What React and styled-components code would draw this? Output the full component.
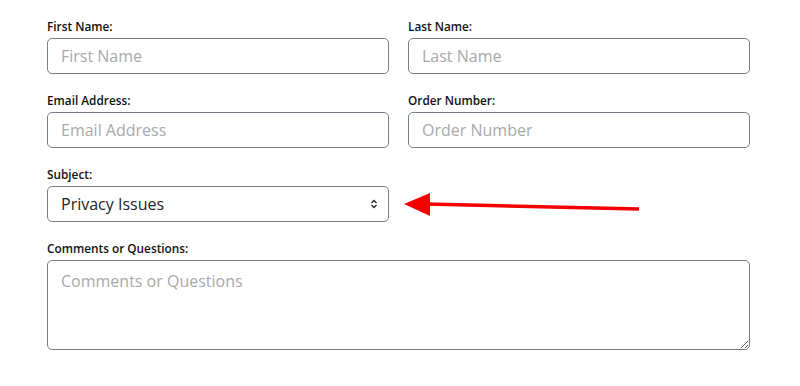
import React from "react";
import styled, { createGlobalStyle } from "styled-components";

const Global = createGlobalStyle`
  * { box-sizing: border-box; }
  body { margin: 0; background: #fff; font-family: "Open Sans", "Noto Sans", sans-serif; }
`;

const Page = styled.div`
  position: relative;
  width: 800px;
  height: 386px;
  padding: 18px 50px 0 47px;
`;

const Form = styled.form`
  display: grid;
  grid-template-columns: 1fr 1fr;
  column-gap: 19px;
  row-gap: 18px;
  width: 703px;
`;

const Field = styled.div`
  display: flex;
  flex-direction: column;
  gap: 4px;
  grid-column: ${(p) => (p.$wide ? "1 / 3" : "auto")};
`;

const Label = styled.label`
  font-size: 11.8px;
  line-height: 16px;
  font-weight: 600;
  color: #111;
`;

const Input = styled.input`
  height: 36px;
  width: 100%;
  border: 1px solid #76808a;
  border-radius: 5px;
  padding: 0 13px;
  font-family: "Open Sans", sans-serif;
  font-size: 16px;
  color: #212529;
  outline: none;
  &::placeholder { color: #a9a9a9; }
`;

const SelectWrap = styled.div`
  position: relative;
  width: 342px;
`;

const Select = styled.select`
  appearance: none;
  -webkit-appearance: none;
  height: 36px;
  width: 100%;
  border: 1px solid #76808a;
  border-radius: 5px;
  padding: 0 13px;
  background: #fff;
  font-family: "Open Sans", sans-serif;
  font-size: 16px;
  color: #212529;
  outline: none;
`;

const Caret = styled.svg`
  position: absolute;
  right: 11px;
  top: 12px;
  pointer-events: none;
`;

const TextArea = styled.textarea`
  height: 90px;
  width: 100%;
  border: 1px solid #76808a;
  border-radius: 5px;
  padding: 9px 13px;
  font-family: "Open Sans", sans-serif;
  font-size: 16px;
  line-height: 22px;
  color: #212529;
  resize: both;
  outline: none;
  &::placeholder { color: #a9a9a9; }
`;

const Arrow = styled.svg`
  position: absolute;
  left: 400px;
  top: 188px;
`;

export default function App() {
  return (
    <Page>
      <Global />
      <Form onSubmit={(e) => e.preventDefault()}>
        <Field>
          <Label>First Name:</Label>
          <Input placeholder="First Name" />
        </Field>
        <Field>
          <Label>Last Name:</Label>
          <Input placeholder="Last Name" />
        </Field>
        <Field>
          <Label>Email Address:</Label>
          <Input placeholder="Email Address" />
        </Field>
        <Field>
          <Label>Order Number:</Label>
          <Input placeholder="Order Number" />
        </Field>
        <Field $wide>
          <Label>Subject:</Label>
          <SelectWrap>
            <Select defaultValue="privacy">
              <option value="privacy">Privacy Issues</option>
              <option value="order">Order Issues</option>
            </Select>
            <Caret width="8" height="12" viewBox="0 0 8 12">
              <path d="M1.5 5 L4 2.5 L6.5 5 M1.5 7 L4 9.5 L6.5 7" fill="none" stroke="#222" strokeWidth="1.3" />
            </Caret>
          </SelectWrap>
        </Field>
        <Field $wide>
          <Label>Comments or Questions:</Label>
          <TextArea placeholder="Comments or Questions" />
        </Field>
      </Form>
      <Arrow width="250" height="34" viewBox="0 0 250 34">
        <line x1="26" y1="16" x2="239" y2="21" stroke="#f40000" strokeWidth="3.5" />
        <polygon points="4,16 30,5 30,28" fill="#f40000" />
      </Arrow>
    </Page>
  );
}
